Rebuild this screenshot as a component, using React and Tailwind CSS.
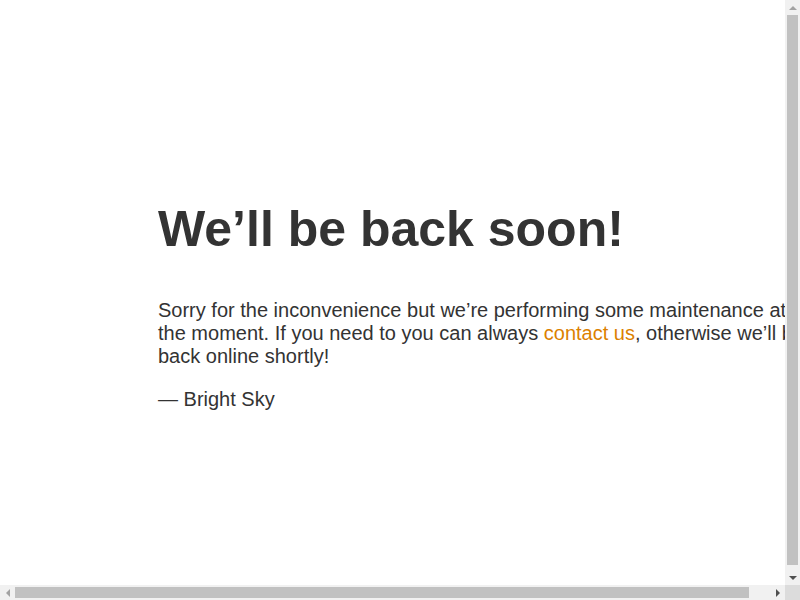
import React from 'react';

// Small triangle used on the scrollbar buttons
const Arrow = ({ dir, color }) => {
  const points = {
    up: '0,4 4,0 8,4',
    down: '0,0 8,0 4,4',
    left: '4,0 4,8 0,4',
    right: '0,0 0,8 4,4',
  }[dir];
  const vertical = dir === 'up' || dir === 'down';
  return (
    <svg width={vertical ? 8 : 4} height={vertical ? 4 : 8} viewBox={vertical ? '0 0 8 4' : '0 0 4 8'}>
      <polygon points={points} fill={color} />
    </svg>
  );
};

const App = () => {
  return (
    <div className="flex h-screen w-screen flex-col overflow-hidden bg-white">
      <div className="flex min-h-0 flex-1">
        {/* Page content */}
        <div className="min-w-0 flex-1 overflow-hidden">
          <div className="m-2 p-[150px] text-center font-['Liberation_Sans',Helvetica,sans-serif] text-[20px] leading-[normal] text-[#333]">
            <article className="block w-[650px] mx-auto text-left">
              <h1 className="text-[50px] font-bold leading-[normal] my-[41.5px]">We’ll be back soon!</h1>
              <div>
                <p className="my-5">
                  Sorry for the inconvenience but we’re performing some maintenance at the moment. If you need to you can always{' '}
                  <a href="#" className="text-[#dc8100] no-underline">contact us</a>, otherwise we’ll be back online shortly!
                </p>
                <p className="my-5">— Bright Sky</p>
              </div>
            </article>
          </div>
        </div>

        {/* Vertical scrollbar */}
        <div className="flex w-[15px] shrink-0 flex-col bg-[#f1f1f1]">
          <div className="flex h-[15px] items-center justify-center">
            <Arrow dir="up" color="#a3a3a3" />
          </div>
          <div className="flex-1 px-[2px]">
            <div className="h-[550px] bg-[#c1c1c1]" />
          </div>
          <div className="flex h-[15px] items-center justify-center">
            <Arrow dir="down" color="#505050" />
          </div>
        </div>
      </div>

      {/* Horizontal scrollbar */}
      <div className="flex h-[15px] shrink-0">
        <div className="flex flex-1 bg-[#f1f1f1]">
          <div className="flex w-[15px] items-center justify-center">
            <Arrow dir="left" color="#a3a3a3" />
          </div>
          <div className="flex-1 py-[2px]">
            <div className="h-full w-[734px] bg-[#c1c1c1]" />
          </div>
          <div className="flex w-[15px] items-center justify-center">
            <Arrow dir="right" color="#505050" />
          </div>
        </div>
        <div className="w-[15px] bg-[#dcdcdc]" />
      </div>
    </div>
  );
};

export default App;
